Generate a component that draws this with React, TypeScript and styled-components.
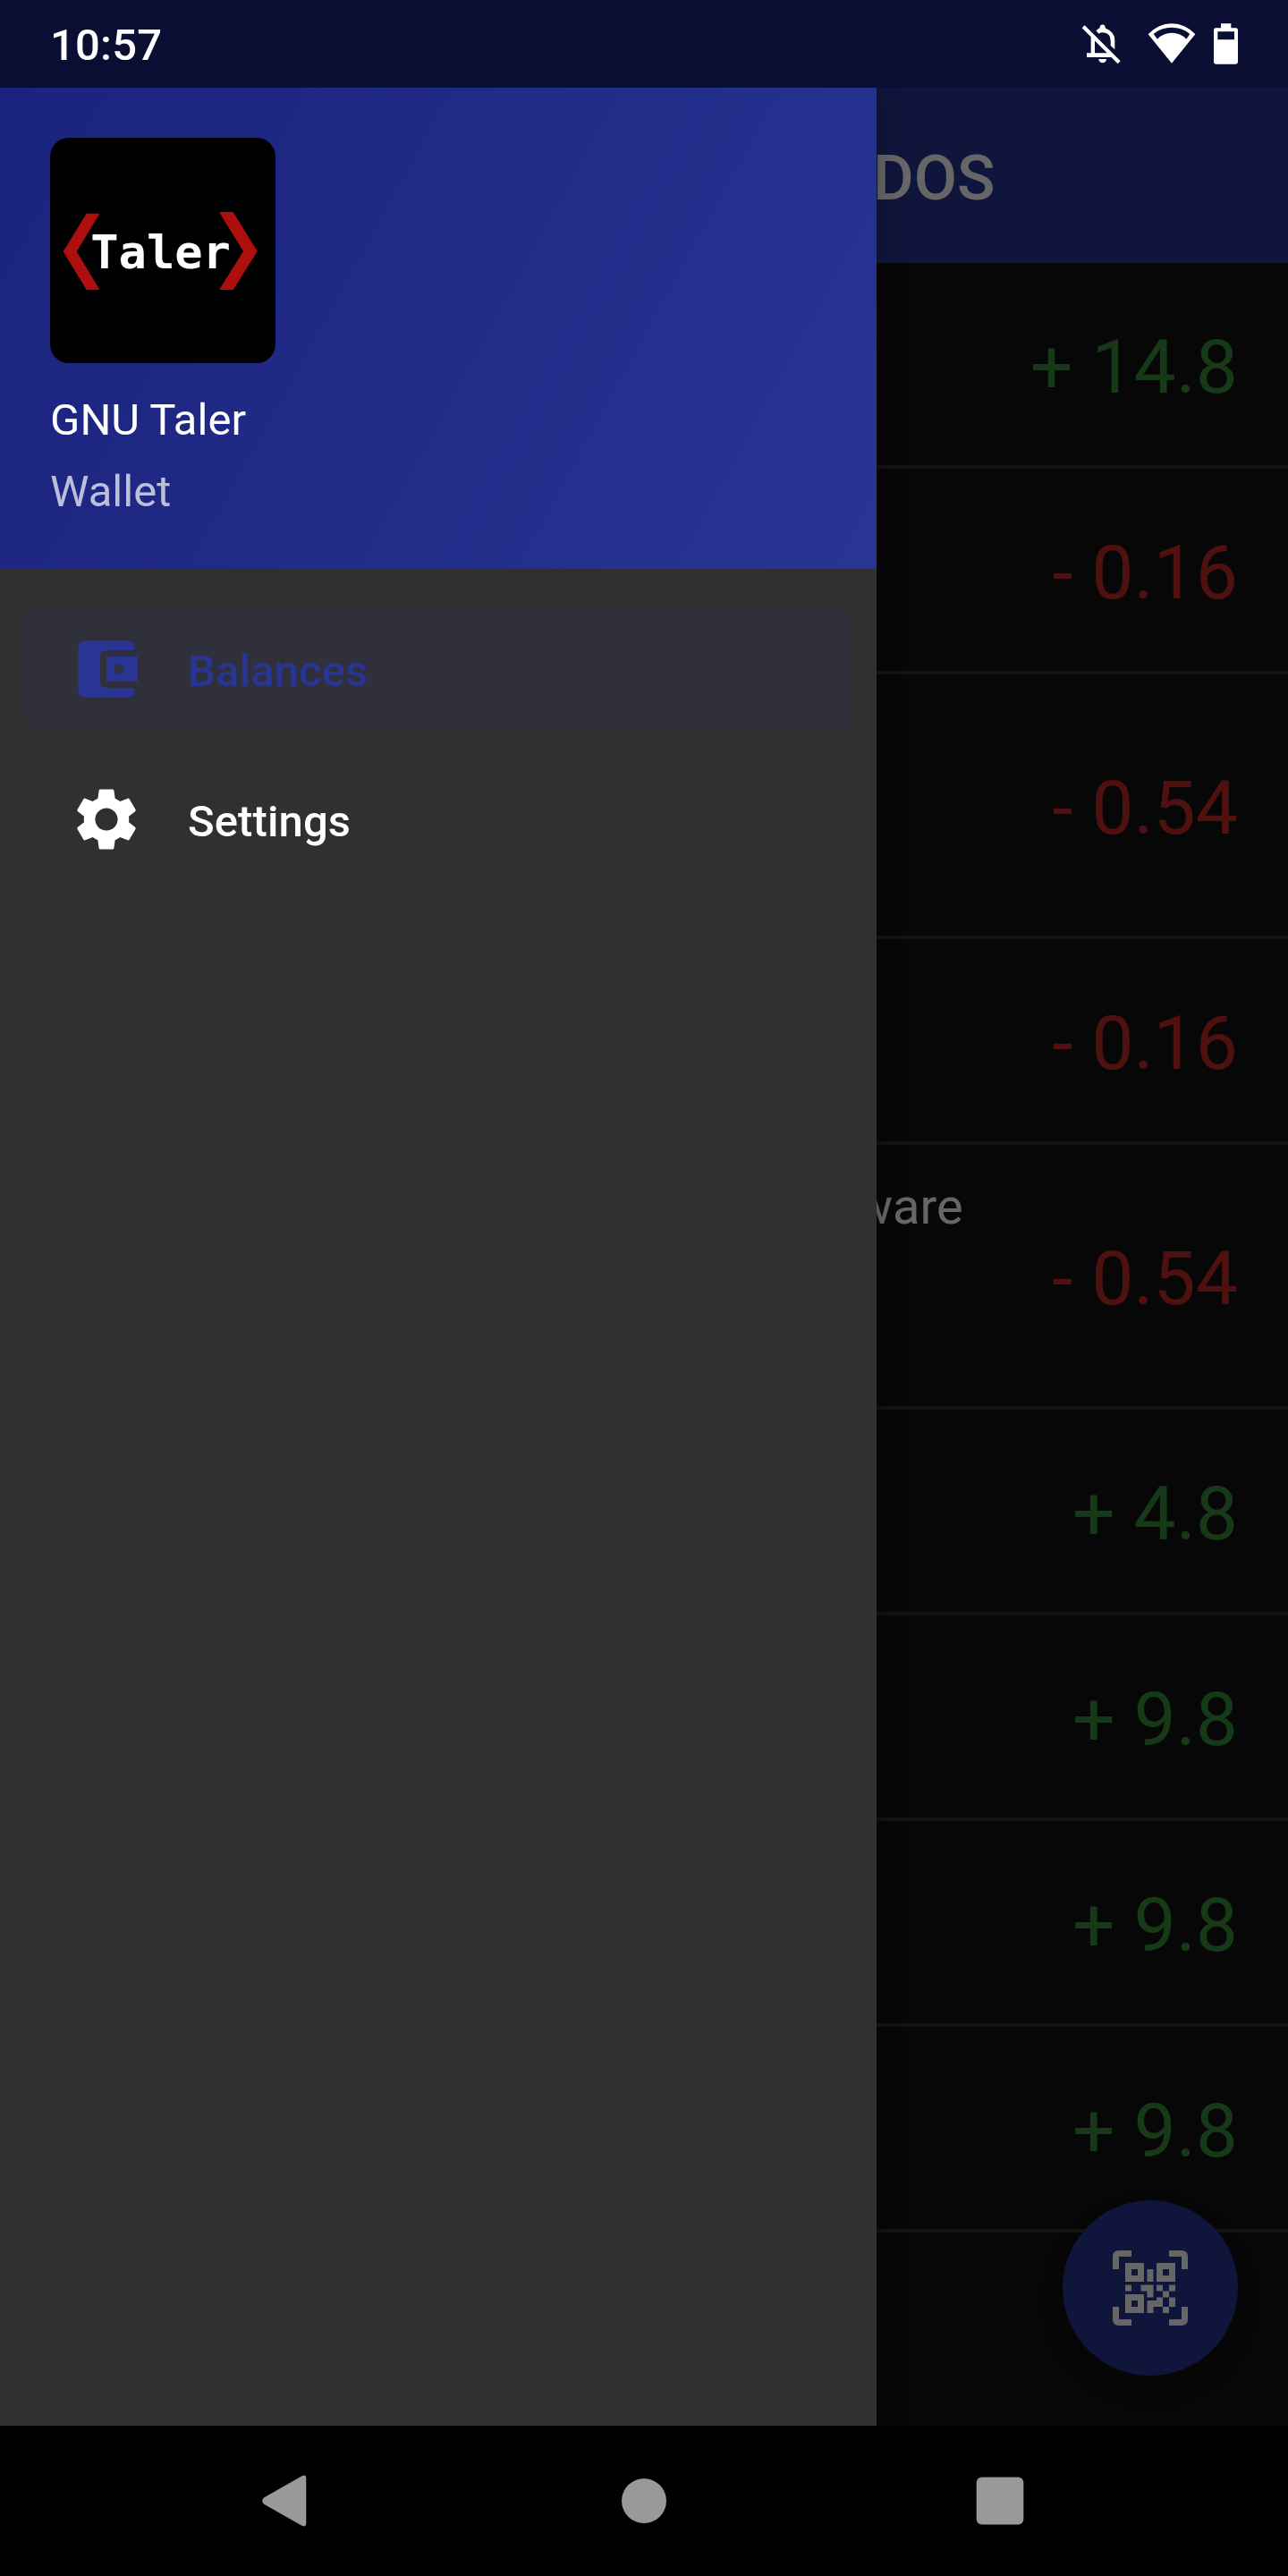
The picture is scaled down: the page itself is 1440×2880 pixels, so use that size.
import React from "react";
import styled, { createGlobalStyle } from "styled-components";

const GlobalStyle = createGlobalStyle`
  * { box-sizing: border-box; }
  html, body { margin: 0; padding: 0; background: #000; }
  body { font-family: Roboto, "Noto Sans", sans-serif; }
`;

const Screen = styled.div`
  position: relative;
  display: flex;
  flex-direction: column;
  width: 1440px;
  height: 2880px;
  overflow: hidden;
  background: #000;
`;

const StatusBar = styled.header`
  display: flex;
  align-items: center;
  justify-content: space-between;
  height: 98px;
  padding: 4px 56px 0;
  background: #0a0e32;
  color: #fff;
`;

const Clock = styled.span`
  font-size: 49px;
  font-weight: 500;
  line-height: 58px;
  letter-spacing: 0.2px;
`;

const StatusIcons = styled.div`
  display: flex;
  align-items: center;
  height: 50px;
`;

const StatusGlyph = styled.svg<{ $gap?: number }>`
  display: block;
  margin-left: ${(p) => p.$gap ?? 0}px;
  fill: #fff;
`;

const Body = styled.div`
  position: relative;
  flex: 1;
  overflow: hidden;
`;

const Page = styled.main`
  display: flex;
  flex-direction: column;
  height: 100%;
  background: #121212;
`;

const AppBar = styled.div`
  display: flex;
  align-items: center;
  height: 196px;
  padding: 6px 0 0 976px;
  background: #283593;
`;

const AppTitle = styled.h1`
  margin: 0;
  color: #fff;
  font-size: 70px;
  font-weight: 500;
  line-height: 82px;
`;

const TransactionRow = styled.div<{ $tall?: boolean }>`
  display: flex;
  align-items: center;
  justify-content: flex-end;
  height: ${(p) => (p.$tall ? 296 : 230)}px;
  padding-right: 56px;
  border-bottom: 4px solid #303030;
`;

const Merchant = styled.span`
  align-self: flex-start;
  flex: 1;
  padding: 36px 0 0 956px;
  color: #fff;
  font-size: 56px;
  line-height: 66px;
`;

const Amount = styled.span<{ $positive: boolean }>`
  color: ${(p) => (p.$positive ? "#388e3c" : "#c62828")};
  font-size: 84px;
  line-height: 98px;
  padding-top: 8px;
  white-space: nowrap;
`;

const ScanButton = styled.button`
  position: absolute;
  right: 56px;
  bottom: 56px;
  display: flex;
  align-items: center;
  justify-content: center;
  width: 196px;
  height: 196px;
  padding: 0;
  border: 0;
  border-radius: 50%;
  background: #283593;
  box-shadow: 0 14px 24px rgba(0, 0, 0, 0.2);
`;

const Scrim = styled.div`
  position: absolute;
  inset: 0;
  background: rgba(0, 0, 0, 0.6);
`;

const Drawer = styled.aside`
  position: absolute;
  top: 0;
  bottom: 0;
  left: 0;
  display: flex;
  flex-direction: column;
  width: 980px;
  background: #303030;
  box-shadow: 0 8px 28px rgba(0, 0, 0, 0.25);
`;

const DrawerHeader = styled.div`
  display: flex;
  flex-direction: column;
  height: 538px;
  padding: 56px 56px 0;
  background: linear-gradient(118.8deg, #1a237e, #283593);
`;

const Logo = styled.svg`
  display: block;
  border-radius: 21px;
  background: #000;
`;

const LogoText = styled.text`
  fill: #fff;
  font-family: "DejaVu Sans Mono", monospace;
  font-size: 52px;
  font-weight: 700;
`;

const AppName = styled.span`
  margin-top: 35px;
  color: #fff;
  font-size: 49px;
  line-height: 58px;
`;

const AppSubtitle = styled.span`
  margin-top: 22px;
  color: rgba(255, 255, 255, 0.7);
  font-size: 49px;
  line-height: 58px;
`;

const Menu = styled.nav`
  display: flex;
  flex-direction: column;
  gap: 28px;
  padding: 42px 28px;
`;

const MenuItem = styled.a<{ $active?: boolean }>`
  display: flex;
  align-items: center;
  gap: 49px;
  height: 140px;
  padding-left: 49px;
  border-radius: 14px;
  background: ${(p) => (p.$active ? "rgba(40, 53, 147, 0.12)" : "transparent")};
  color: ${(p) => (p.$active ? "#283593" : "#fff")};
  font-size: 49px;
  font-weight: 500;
  line-height: 58px;
`;

const MenuIcon = styled.svg`
  display: block;
  width: 84px;
  height: 84px;
  fill: currentColor;
`;

const MenuLabel = styled.span`
  padding-top: 5px;
  letter-spacing: 0.1px;
`;

const NavBar = styled.footer`
  display: flex;
  align-items: center;
  justify-content: center;
  gap: 328px;
  height: 168px;
  background: #000;
`;

const NavGlyph = styled.svg`
  display: block;
  width: 70px;
  height: 70px;
  fill: #999;
`;

const transactions = [
  { amount: "+ 14.8" },
  { amount: "- 0.16" },
  { amount: "- 0.54", tall: true },
  { amount: "- 0.16" },
  { amount: "- 0.54", tall: true, merchant: "ware" },
  { amount: "+ 4.8" },
  { amount: "+ 9.8" },
  { amount: "+ 9.8" },
  { amount: "+ 9.8" },
];

const SilentIcon = () => (
  <StatusGlyph width="50" height="50" viewBox="80 78 150 150">
    <path d="M88 94L97 85L217 205L208 214Z" />
    <path d="M135 103L144 96Q148 94 148.500 91A8.5 8.5 0 1 1 165.500 91Q166 95 171 97Q198 108 198 136V166L184 153V136Q184 110 157 109Q150 109 145 113Z" />
    <path d="M118 122L131 134V178H177L192 192H104V178H118Z" />
    <path d="M144 198H170A13 13 0 0 1 144 198Z" />
  </StatusGlyph>
);

const WifiIcon = () => (
  <StatusGlyph $gap={26} width="54" height="50" viewBox="307 78 162 150">
    <path
      fillRule="evenodd"
      d="M388 212L309 115A104.7 104.7 0 0 1 467 115ZM327 114L340 131A67.7 67.7 0 0 1 437 131L449 114A95.6 95.6 0 0 0 327 114Z"
    />
  </StatusGlyph>
);

const BatteryIcon = () => (
  <StatusGlyph $gap={20} width="27" height="50" viewBox="531 78 81 150">
    <path
      fillRule="evenodd"
      d="M555 79H589V94H605Q612 94 612 101V208Q612 215 605 215H538Q531 215 531 208V101Q531 94 538 94H555ZM544 106V133H600V106Z"
    />
  </StatusGlyph>
);

const TalerLogo = () => (
  <Logo width="252" height="252" viewBox="0 0 252 252">
    <path
      fill="#ad0f0f"
      d="M40.7 84.7H55.5L29.7 127.3L55.5 170H40.7L14.7 127.3ZM189 83H204.7L231.7 127L204.7 170H189L216 127Z"
    />
    <LogoText x="45.3" y="146.3">
      Taler
    </LogoText>
  </Logo>
);

const QrIcon = () => (
  <svg width="84" height="84" viewBox="0 0 84 84" fill="#fff">
    <path d="M7 0H21V7H7V21H0V7Q0 0 7 0ZM63 0H77Q84 0 84 7V21H77V7H63ZM0 63H7V77H21V84H7Q0 84 0 77ZM77 63H84V77Q84 84 77 84H63V77H77Z" />
    <path
      fillRule="evenodd"
      d="M14 14H35V35H14ZM21 21V28H28V21ZM49 14H70V35H49ZM56 21V28H63V21ZM14 49H35V70H14ZM21 56V63H28V56Z"
    />
    <path d="M38.5 21H45.5V35H38.5ZM14 38.5H21V45.5H14ZM31.5 38.5H45.5V52.5H38.5V45.5H31.5ZM49 38.5H56V45.5H49ZM63 38.5H70V45.5H63ZM56 45.5H63V52.5H56ZM49 52.5H56V63H45.5V70H38.5V56H49ZM63 52.5H70V63H63ZM56 63H63V70H56Z" />
  </svg>
);

export default function App() {
  return (
    <Screen>
      <GlobalStyle />
      <StatusBar>
        <Clock>10:57</Clock>
        <StatusIcons>
          <SilentIcon />
          <WifiIcon />
          <BatteryIcon />
        </StatusIcons>
      </StatusBar>
      <Body>
        <Page>
          <AppBar>
            <AppTitle>DOS</AppTitle>
          </AppBar>
          {transactions.map((t, i) => (
            <TransactionRow key={i} $tall={t.tall}>
              {t.merchant && <Merchant>{t.merchant}</Merchant>}
              <Amount $positive={t.amount.startsWith("+")}>{t.amount}</Amount>
            </TransactionRow>
          ))}
        </Page>
        <ScanButton aria-label="QR">
          <QrIcon />
        </ScanButton>
        <Scrim />
        <Drawer>
          <DrawerHeader>
            <TalerLogo />
            <AppName>GNU Taler</AppName>
            <AppSubtitle>Wallet</AppSubtitle>
          </DrawerHeader>
          <Menu>
            <MenuItem $active>
              <MenuIcon viewBox="0 0 24 24">
                <path d="M21 18v1c0 1.1-.9 2-2 2H5c-1.11 0-2-.9-2-2V5c0-1.1.89-2 2-2h14c1.1 0 2 .9 2 2v1h-9c-1.11 0-2 .9-2 2v8c0 1.1.89 2 2 2h9zm-9-2h10V8H12v8zm4-2.5c-.83 0-1.5-.67-1.5-1.5s.67-1.5 1.5-1.5 1.5.67 1.5 1.5-.67 1.5-1.5 1.5z" />
              </MenuIcon>
              <MenuLabel>Balances</MenuLabel>
            </MenuItem>
            <MenuItem>
              <MenuIcon viewBox="0 0 24 24">
                <path d="M19.14 12.94c.04-.3.06-.61.06-.94 0-.32-.02-.64-.07-.94l2.03-1.58c.18-.14.23-.41.12-.61l-1.92-3.32c-.12-.22-.37-.29-.59-.22l-2.39.96c-.5-.38-1.03-.7-1.62-.94l-.36-2.54c-.04-.24-.24-.41-.48-.41h-3.84c-.24 0-.43.17-.47.41l-.36 2.54c-.59.24-1.13.57-1.62.94l-2.39-.96c-.22-.08-.47 0-.59.22L2.74 8.87c-.12.21-.08.47.12.61l2.03 1.58c-.05.3-.09.63-.09.94s.02.64.07.94l-2.03 1.58c-.18.14-.23.41-.12.61l1.92 3.32c.12.22.37.29.59.22l2.39-.96c.5.38 1.03.7 1.62.94l.36 2.54c.05.24.24.41.48.41h3.84c.24 0 .44-.17.47-.41l.36-2.54c.59-.24 1.13-.56 1.62-.94l2.39.96c.22.08.47 0 .59-.22l1.92-3.32c.12-.22.07-.47-.12-.61l-2.01-1.58zM12 15.6c-1.98 0-3.6-1.62-3.6-3.6s1.62-3.6 3.6-3.6 3.6 1.62 3.6 3.6-1.62 3.6-3.6 3.6z" />
              </MenuIcon>
              <MenuLabel>Settings</MenuLabel>
            </MenuItem>
          </Menu>
        </Drawer>
      </Body>
      <NavBar>
        <NavGlyph viewBox="0 0 70 70">
          <path d="M7.8 31.5L50 7.4Q55.3 5 55.3 10V60Q55.3 65 50 62.6L7.8 38.5Q4.8 35 7.8 31.5Z" />
        </NavGlyph>
        <NavGlyph viewBox="0 0 70 70">
          <circle cx="35" cy="35" r="25" />
        </NavGlyph>
        <NavGlyph viewBox="0 0 70 70">
          <rect x="8.7" y="8.5" width="52.6" height="53" rx="6" />
        </NavGlyph>
      </NavBar>
    </Screen>
  );
}
